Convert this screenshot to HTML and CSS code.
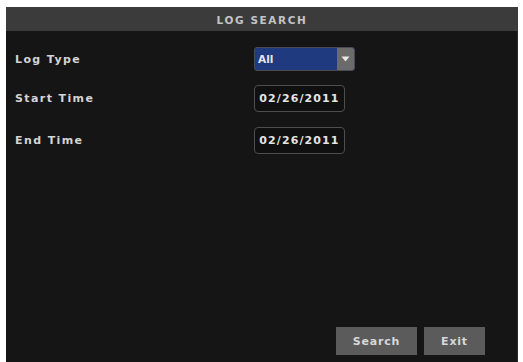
FILE: index.html
```html
<!DOCTYPE html>
<html>
<head>
<meta charset="utf-8">
<link rel="stylesheet" href="styles.css">
</head>
<body>
<div class="panel">
  <div class="title">LOG SEARCH</div>
  <div class="content">
    <div class="form">
      <div class="label">Log Type</div>
      <div class="select">
        <span class="select-value">All</span>
        <span class="select-arrow">
          <svg width="9" height="6" viewBox="0 0 9 6"><path d="M0.5 0.5 L8.5 0.5 L4.5 5.5 Z" fill="#e8e8e8"/></svg>
        </span>
      </div>
      <div class="label">Start Time</div>
      <div class="date">02/26/2011</div>
      <div class="label">End Time</div>
      <div class="date">02/26/2011</div>
    </div>
    <div class="buttons">
      <div class="btn btn-search">Search</div>
      <div class="btn btn-exit">Exit</div>
    </div>
  </div>
</div>
</body>
</html>
```
FILE: styles.css
```css
html, body {
  margin: 0;
  padding: 0;
  background: #ffffff;
}
body {
  padding: 7px 5px 0 6px;
  font-family: "DejaVu Sans", "Liberation Sans", sans-serif;
  font-weight: bold;
}
.panel {
  width: 512px;
  height: 355px;
  background: #151515;
  display: flex;
  flex-direction: column;
  box-shadow: inset -1px 0 0 #2a2a2a;
}
.title {
  height: 24px;
  background: #3b3b3b;
  color: #c4c4c4;
  font-size: 10.5px;
  letter-spacing: 1.6px;
  display: flex;
  align-items: center;
  justify-content: center;
  padding-top: 1px;
  box-sizing: border-box;
}
.content {
  flex: 1;
  display: flex;
  flex-direction: column;
  padding: 16px 33px 7px 9px;
}
.form {
  display: grid;
  grid-template-columns: 239px auto;
  grid-template-rows: 24px 27px 28px;
  row-gap: 14px;
  align-items: center;
}
.label {
  color: #d4d4d4;
  font-size: 11px;
  letter-spacing: 1.4px;
}
.select {
  width: 101px;
  height: 24px;
  box-sizing: border-box;
  border: 1px solid #4a4a52;
  border-radius: 3px;
  background: #1f3a7e;
  display: flex;
  align-items: center;
  overflow: hidden;
}
.select-value {
  flex: 1;
  color: #e6e6f0;
  font-size: 10.5px;
  padding-left: 3px;
}
.select-arrow {
  width: 17px;
  height: 100%;
  background: #6b6b6b;
  display: flex;
  align-items: center;
  justify-content: center;
}
.date {
  width: 91px;
  height: 27px;
  box-sizing: border-box;
  border: 1px solid #4e4e4e;
  border-radius: 4px;
  background: #101010;
  color: #e4e4e4;
  font-size: 11px;
  letter-spacing: 1.1px;
  display: flex;
  align-items: center;
  justify-content: center;
}
.buttons {
  margin-top: auto;
  display: flex;
  justify-content: flex-end;
  gap: 7px;
}
.btn {
  height: 28px;
  background: #5b5b5b;
  color: #d8d8d8;
  font-size: 11px;
  letter-spacing: 0.8px;
  display: flex;
  align-items: center;
  justify-content: center;
}
.btn-search {
  width: 81px;
}
.btn-exit {
  width: 61px;
}
```
